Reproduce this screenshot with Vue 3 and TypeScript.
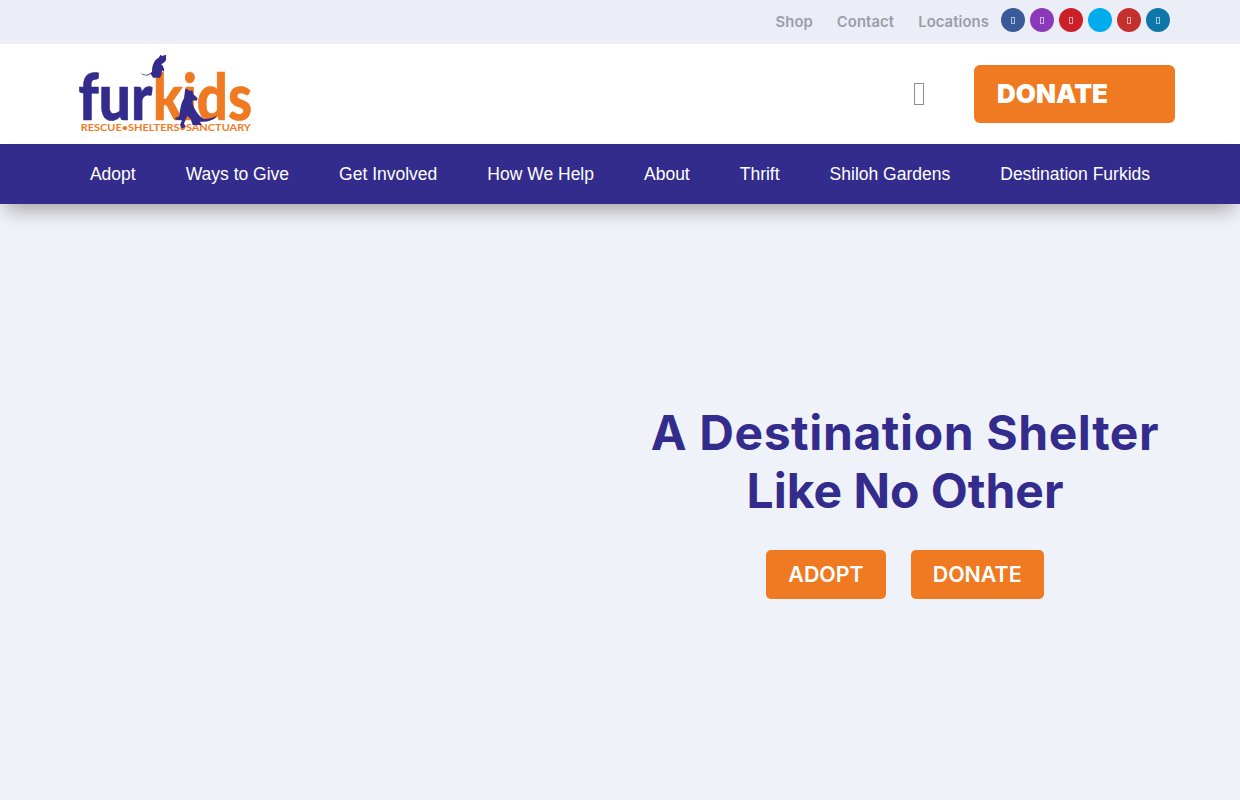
<script setup lang="ts">
const topLinks = ['Shop', 'Contact', 'Locations']
const socials = [
  { name: 'facebook', color: '#3b5998', box: true },
  { name: 'instagram', color: '#8a3ab9', box: true },
  { name: 'pinterest', color: '#cb2027', box: true },
  { name: 'twitter', color: '#00aced', box: false },
  { name: 'youtube', color: '#c4302b', box: true },
  { name: 'linkedin', color: '#0e76a8', box: true },
]
const navItems = ['Adopt', 'Ways to Give', 'Get Involved', 'How We Help', 'About', 'Thrift', 'Shiloh Gardens', 'Destination Furkids']
</script>

<template>
  <div class="page">
    <div class="topbar">
      <a v-for="link in topLinks" :key="link" class="top-link">{{ link }}</a>
      <div class="socials">
        <span v-for="s in socials" :key="s.name" class="social" :style="{ background: s.color }">
          <i v-if="s.box" class="social-box"></i>
        </span>
      </div>
    </div>

    <header class="header">
      <svg class="logo" viewBox="54 24 522 240" width="174" height="80" role="img" aria-label="Furkids logo">
        <text x="55" y="225" class="logo-word" fill="#332c8c" stroke="#332c8c" textLength="222" lengthAdjust="spacingAndGlyphs">fur</text>
        <text x="279" y="225" class="logo-word" fill="#f07a22" stroke="#f07a22" textLength="297" lengthAdjust="spacingAndGlyphs">kids</text>
        <text x="62" y="258" class="logo-tag" fill="#f07a22" textLength="511" lengthAdjust="spacingAndGlyphs">RESCUE•SHELTERS•SANCTUARY</text>
        <path fill="#332c8c" d="M240 82C250 92 265 92 276 80C276 62 282 45 296 38L302 29L306 33L318 29L318 44C316 52 308 54 304 58C310 64 314 72 312 80L306 76L304 90L300 98L280 98C276 94 274 90 272 86C260 96 248 92 240 82Z" />
        <path fill="#332c8c" d="M376 130L390 138L397 136L400 148L413 160L410 167L398 166C396 176 400 186 408 198C414 208 420 216 432 222C446 222 458 218 471 212C460 226 440 232 420 230L425 240L398 240L392 222L382 212L372 236L378 246L366 250L360 240L366 226L348 224L344 220L358 214C360 196 362 176 372 160Z" />
      </svg>
      <i class="search-box"></i>
      <a class="donate-top">DONATE</a>
    </header>

    <nav class="nav">
      <a v-for="item in navItems" :key="item" class="nav-item">{{ item }}</a>
    </nav>

    <main class="hero">
      <div class="hero-copy">
        <h1 class="hero-title">
          <span class="title-first">A Destination Shelter</span>
          <span>Like No Other</span>
        </h1>
        <div class="hero-actions">
          <a class="cta">ADOPT</a>
          <a class="cta">DONATE</a>
        </div>
      </div>
    </main>
  </div>
</template>

<style>
html, body {
  margin: 0;
  background: #f0f2f9;
}
</style>

<style scoped>
.page {
  height: 800px;
  overflow: hidden;
  background: #f0f2f9;
  font-family: "Inter", "Open Sans", sans-serif;
}
.topbar {
  height: 44px;
  box-sizing: border-box;
  padding-right: 70px;
  display: flex;
  justify-content: flex-end;
  align-items: center;
  gap: 24px;
  background: #ebeef7;
}
.top-link {
  font-size: 14.8px;
  font-weight: 600;
  letter-spacing: 0.1px;
  color: #9a9ea8;
}
.socials {
  display: flex;
  gap: 5px;
  margin-left: -12px;
  margin-top: -4px;
}
.social {
  width: 24px;
  height: 24px;
  border-radius: 50%;
  display: flex;
  align-items: center;
  justify-content: center;
}
.social-box {
  width: 2px;
  height: 5px;
  border: 1px solid rgba(255, 255, 255, 0.6);
}
.header {
  height: 100px;
  box-sizing: border-box;
  background: #fff;
  display: flex;
  align-items: center;
  padding: 0 65px 0 78px;
}
.logo {
  margin-top: -2px;
}
.logo-word {
  font-family: "Lato", sans-serif;
  font-size: 195px;
  font-weight: 900;
  stroke-width: 2px;
}
.logo-tag {
  font-family: "Lato", sans-serif;
  font-size: 29px;
  font-weight: 700;
}
.search-box {
  margin-left: auto;
  width: 8px;
  height: 20px;
  border: 1px solid #8d8d8d;
}
.donate-top {
  margin-left: 50px;
  width: 201px;
  height: 58px;
  box-sizing: border-box;
  padding: 0 0 2px 23px;
  display: flex;
  align-items: center;
  background: #ef7a22;
  border-radius: 6px;
  color: #fff;
  font-size: 26px;
  font-weight: 900;
}
.nav {
  position: relative;
  height: 60px;
  display: flex;
  justify-content: center;
  align-items: center;
  gap: 50px;
  background: #332c8c;
  box-shadow: 0 12px 20px -6px rgba(0, 0, 0, 0.33);
}
.nav-item {
  font-family: "Liberation Sans", Arial, sans-serif;
  font-size: 17.5px;
  color: #fff;
}
.hero {
  display: flex;
  justify-content: flex-end;
  padding: 200px 70px 0 0;
}
.hero-copy {
  width: 530px;
  text-align: center;
}
.hero-title {
  margin: 0;
  font-size: 48px;
  line-height: 58px;
  font-weight: 700;
  color: #332c8c;
}
.hero-title span {
  display: block;
}
.hero-title .title-first {
  letter-spacing: 0.6px;
}
.hero-actions {
  margin-top: 30px;
  display: flex;
  justify-content: center;
  gap: 25px;
}
.cta {
  height: 49px;
  box-sizing: border-box;
  padding: 0 22px 2px;
  display: flex;
  align-items: center;
  background: #ef7a22;
  border-radius: 5px;
  color: #fff;
  font-size: 21.4px;
  font-weight: 600;
}
</style>
